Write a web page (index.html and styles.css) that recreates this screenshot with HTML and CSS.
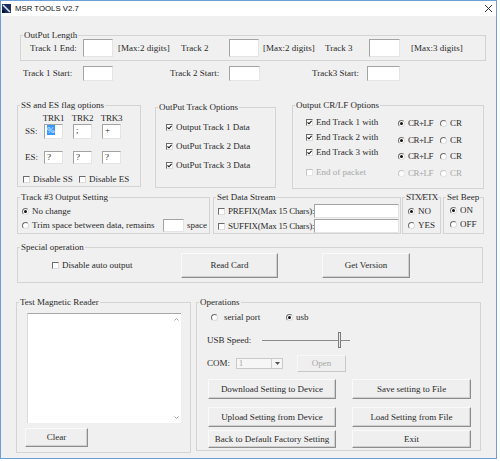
FILE: index.html
```html
<!DOCTYPE html>
<html lang="en">
<head>
  <meta charset="UTF-8">
  <meta name="viewport" content="width=device-width, initial-scale=1.0">
  <title>MSR TOOLS V2.7</title>
  <link rel="stylesheet" href="styles.css">
</head>
<body>
  <div class="window">
    <div class="titlebar">
      <svg class="app-icon" width="9" height="9" viewBox="0 0 9 9">
        <rect width="9" height="9" fill="#1c2d60"/>
        <path d="M1 1L8 8" stroke="#dbe6f4" stroke-width="1.6"/>
        <rect y="6" width="3" height="3" fill="#0a1430"/>
      </svg>
      <span class="title">MSR TOOLS V2.7</span>
      <svg class="close" width="9" height="9" viewBox="0 0 9 9">
        <path d="M1 1L8 8M8 1L1 8" stroke="#222" stroke-width="0.9"/>
      </svg>
    </div>

    <div class="client">
      <div class="group g-length">
        <span class="legend">OutPut Length</span>
        <span>Track 1 End:</span>
        <span class="edit"></span>
        <span class="hint hint-1">[Max:2 digits]</span>
        <span>Track 2</span>
        <span class="edit"></span>
        <span class="hint hint-2">[Max:2 digits]</span>
        <span>Track 3</span>
        <span class="edit"></span>
        <span class="hint hint-3">[Max:3 digits]</span>
      </div>

      <div class="start-row">
        <span>Track 1 Start:</span>
        <span class="edit"></span>
        <span class="start-2">Track 2 Start:</span>
        <span class="edit"></span>
        <span class="start-3">Track3 Start:</span>
        <span class="edit"></span>
      </div>

      <div class="row opt-row">
        <div class="group g-flags">
          <span class="legend">SS and ES flag options</span>
          <div class="trk-head"><span>TRK1</span><span>TRK2</span><span>TRK3</span></div>
          <div class="trk-line trk-ss">
            <span class="trk-lbl">SS:</span>
            <span class="edit"><span class="sel">%</span></span>
            <span class="edit">;</span>
            <span class="edit">+</span>
          </div>
          <div class="trk-line trk-es">
            <span class="trk-lbl">ES:</span>
            <span class="edit">?</span>
            <span class="edit">?</span>
            <span class="edit">?</span>
          </div>
          <div class="flag-line">
            <span class="chk"><span class="cb"></span>Disable SS</span>
            <span class="chk"><span class="cb"></span>Disable ES</span>
          </div>
        </div>

        <div class="group g-tracks">
          <span class="legend">OutPut Track Options</span>
          <span class="chk"><span class="cb"><svg viewBox="0 0 5 5"><path d="M0.5 2.3L2 3.8L4.6 0.8"/></svg></span>Output Track 1 Data</span>
          <span class="chk"><span class="cb"><svg viewBox="0 0 5 5"><path d="M0.5 2.3L2 3.8L4.6 0.8"/></svg></span>OutPut Track 2 Data</span>
          <span class="chk"><span class="cb"><svg viewBox="0 0 5 5"><path d="M0.5 2.3L2 3.8L4.6 0.8"/></svg></span>OutPut Track 3 Data</span>
        </div>

        <div class="group g-crlf">
          <span class="legend">Output CR/LF Options</span>
          <div class="crlf-checks">
            <span class="chk"><span class="cb"><svg viewBox="0 0 5 5"><path d="M0.5 2.3L2 3.8L4.6 0.8"/></svg></span>End Track 1 with</span>
            <span class="chk"><span class="cb"><svg viewBox="0 0 5 5"><path d="M0.5 2.3L2 3.8L4.6 0.8"/></svg></span>End Track 2 with</span>
            <span class="chk"><span class="cb"><svg viewBox="0 0 5 5"><path d="M0.5 2.3L2 3.8L4.6 0.8"/></svg></span>End Track 3 with</span>
            <span class="chk dis"><span class="cb"></span>End of packet</span>
          </div>
          <div class="crlf-radios">
            <div class="pair">
              <span class="rad rad-crlf"><span class="rb on"></span>CR+LF</span>
              <span class="rad"><span class="rb"></span>CR</span>
            </div>
            <div class="pair">
              <span class="rad rad-crlf"><span class="rb on"></span>CR+LF</span>
              <span class="rad"><span class="rb"></span>CR</span>
            </div>
            <div class="pair">
              <span class="rad rad-crlf"><span class="rb on"></span>CR+LF</span>
              <span class="rad"><span class="rb"></span>CR</span>
            </div>
            <div class="pair dis">
              <span class="rad rad-crlf"><span class="rb"></span>CR+LF</span>
              <span class="rad"><span class="rb"></span>CR</span>
            </div>
          </div>
        </div>
      </div>

      <div class="row stream-row">
        <div class="group g-trim">
          <span class="legend">Track #3 Output Setting</span>
          <span class="rad"><span class="rb on"></span>No change</span>
          <div class="trim-line">
            <span class="rad trim-rad"><span class="rb"></span>Trim space between data, remains</span>
            <span class="edit trim-edit"></span>
            <span class="space-lbl">space</span>
          </div>
        </div>

        <div class="group g-stream">
          <span class="legend">Set Data Stream</span>
          <div class="ds-line">
            <span class="chk tight"><span class="cb"></span>PREFIX(Max 15 Chars):</span>
            <span class="edit"></span>
          </div>
          <div class="ds-line">
            <span class="chk tight"><span class="cb"></span>SUFFIX(Max 15 Chars):</span>
            <span class="edit"></span>
          </div>
        </div>

        <div class="group g-stx">
          <span class="legend legend-stx">STX/ETX</span>
          <span class="rad"><span class="rb on"></span>NO</span>
          <span class="rad"><span class="rb"></span>YES</span>
        </div>

        <div class="group g-beep">
          <span class="legend">Set Beep</span>
          <span class="rad"><span class="rb on"></span>ON</span>
          <span class="rad"><span class="rb"></span>OFF</span>
        </div>
      </div>

      <div class="group g-special">
        <span class="legend">Special operation</span>
        <span class="chk auto-chk"><span class="cb"></span>Disable auto output</span>
        <span class="btn btn-read">Read Card</span>
        <span class="btn btn-version">Get Version</span>
      </div>

      <div class="row bottom-row">
        <div class="group g-test">
          <span class="legend">Test Magnetic Reader</span>
          <div class="memo">
            <div class="memo-text"></div>
            <div class="memo-bar">
              <svg width="5" height="3" viewBox="0 0 5 3"><path d="M0.5 2.5L2.5 0.5L4.5 2.5"/></svg>
              <svg width="5" height="3" viewBox="0 0 5 3"><path d="M0.5 0.5L2.5 2.5L4.5 0.5"/></svg>
            </div>
          </div>
          <span class="btn btn-clear">Clear</span>
        </div>

        <div class="group g-ops">
          <span class="legend">Operations</span>
          <div class="port-line">
            <span class="rad rad-serial"><span class="rb"></span>serial port</span>
            <span class="rad"><span class="rb on"></span>usb</span>
          </div>
          <div class="speed-line">
            <span class="speed-lbl">USB Speed:</span>
            <svg width="88" height="18" viewBox="0 0 88 18">
              <path d="M0 9.5H88" stroke="#8c8c8c"/>
              <rect x="76.5" y="1.5" width="2" height="15" fill="#ececec" stroke="#7a7a7a"/>
            </svg>
          </div>
          <div class="com-line">
            <span class="com-lbl">COM:</span>
            <span class="combo">
              <span class="combo-val">1</span>
              <span class="combo-btn"><svg width="5" height="3" viewBox="0 0 5 3"><path d="M0 0H5L2.5 3Z"/></svg></span>
            </span>
            <span class="btn btn-open">Open</span>
          </div>
          <div class="btn-line line-1">
            <span class="btn">Download Setting to Device</span>
            <span class="btn">Save setting to File</span>
          </div>
          <div class="btn-line line-2">
            <span class="btn">Upload Setting from Device</span>
            <span class="btn">Load Setting from File</span>
          </div>
          <div class="btn-line line-3">
            <span class="btn">Back to Default Factory Setting</span>
            <span class="btn">Exit</span>
          </div>
        </div>
      </div>
    </div>
  </div>
</body>
</html>
```

FILE: styles.css
```css
/* MSR TOOLS dialog */
* {
  box-sizing: border-box;
}

body {
  margin: 0;
  background: #fff;
  font-family: "Liberation Serif", "Times New Roman", serif;
  font-size: 9px;
  line-height: 11px;
  color: #2a2a2a;
}

.window {
  width: 497px;
  height: 459px;
  border: 1px solid #6b9fd5;
  background: #f0f0f0;
  overflow: hidden;
}

.titlebar {
  height: 15px;
  background: #fff;
  display: flex;
  align-items: center;
}

.app-icon {
  margin-left: 1px;
}

.title {
  margin-left: 4px;
  font-family: "Liberation Sans", Arial, sans-serif;
  font-size: 7.8px;
  color: #111;
}

.close {
  margin-left: auto;
  margin-right: 3px;
}

.client {
  padding-left: 16px;
}

.row {
  display: flex;
  align-items: flex-start;
}

/* group boxes */
.group {
  position: relative;
  border: 1px solid #d4d4d4;
  flex-shrink: 0;
}

.legend {
  position: absolute;
  top: -6px;
  left: 2px;
  padding: 0 1px;
  background: #f0f0f0;
  white-space: nowrap;
}

/* controls */
.edit {
  display: block;
  background: #fff;
  border: 1px solid;
  border-color: #a3a3a3 #e4e4e4 #e4e4e4 #a3a3a3;
  padding-left: 2px;
}

.sel {
  background: #3399ff;
  color: #fff;
}

.chk,
.rad {
  display: flex;
  align-items: center;
  gap: 3px;
  height: 11px;
  white-space: nowrap;
}

.cb {
  width: 7px;
  height: 7px;
  border: 1px solid;
  border-color: #6c6c6c #dcdcdc #dcdcdc #6c6c6c;
  background: #fff;
  display: flex;
  flex-shrink: 0;
}

.cb svg {
  width: 5px;
  height: 5px;
}

.cb path {
  fill: none;
  stroke: #111;
  stroke-width: 1.1;
}

.rb {
  width: 7px;
  height: 7px;
  border-radius: 50%;
  border: 1px solid;
  border-color: #6c6c6c #dcdcdc #dcdcdc #6c6c6c;
  background: #fff;
  display: flex;
  align-items: center;
  justify-content: center;
  flex-shrink: 0;
}

.rb.on::after {
  content: "";
  width: 3px;
  height: 3px;
  border-radius: 50%;
  background: #111;
}

.dis {
  color: #a8a8a8;
}

.dis .cb,
.dis .rb {
  border-color: #c4c4c4 #e6e6e6 #e6e6e6 #c4c4c4;
}

.btn {
  display: flex;
  align-items: center;
  justify-content: center;
  background: #efefef;
  border: 1px solid;
  border-color: #fafafa #8d8d8d #8d8d8d #fafafa;
  box-shadow: inset -1px -1px 0 #d0d0d0;
  white-space: nowrap;
}

/* output length */
.g-length {
  margin: 19px 0 0 3px;
  width: 466px;
  height: 26px;
  padding-left: 9px;
  display: grid;
  grid-template-columns: 53px 30px 68px 48px 30px 66px 44px 31px auto;
  align-items: center;
}

.g-length .edit {
  height: 18px;
}

.hint-1 { padding-left: 5px; }
.hint-2 { padding-left: 4px; }
.hint-3 { padding-left: 11px; }

.start-row {
  margin: 5px 0 0 6px;
  height: 15px;
  display: grid;
  grid-template-columns: 60px 30px 116px 31px 107px 33px;
  align-items: center;
}

.start-row .edit {
  height: 15px;
}

.start-2 { padding-left: 57px; }
.start-3 { padding-left: 52px; }

/* options row */
.opt-row {
  margin-top: 24px;
}

.g-flags {
  width: 124px;
  height: 82px;
}

.trk-head {
  display: flex;
  margin: 7px 0 0 21px;
  height: 11px;
  letter-spacing: -0.3px;
}

.trk-head span {
  width: 29px;
  text-align: center;
}

.trk-line {
  display: grid;
  grid-template-columns: 16px 19px 19px 19px;
  column-gap: 10px;
}

.trk-lbl {
  padding-left: 7px;
  align-self: center;
}

.trk-ss { height: 15px; }

.trk-es {
  height: 13px;
  margin-top: 12px;
}

.flag-line {
  display: grid;
  grid-template-columns: 56px auto;
  margin: 10px 0 0 5px;
}

.g-tracks {
  margin: 2px 0 0 14px;
  width: 121px;
  height: 81px;
  padding: 14px 0 0 10px;
  display: flex;
  flex-direction: column;
  gap: 8px;
}

.g-crlf {
  margin-left: 16px;
  width: 192px;
  height: 84px;
  display: flex;
}

.crlf-checks {
  width: 105px;
  padding: 11px 0 0 13px;
  display: flex;
  flex-direction: column;
  gap: 4px;
}

.crlf-checks .dis {
  margin-top: 5px;
}

.crlf-radios {
  padding-top: 12px;
  display: flex;
  flex-direction: column;
  gap: 5.5px;
}

.pair {
  display: flex;
}

.rad-crlf {
  width: 42px;
  letter-spacing: -0.5px;
}

/* stream row */
.stream-row {
  margin-top: 8px;
}

.g-trim {
  width: 193px;
  height: 37px;
  padding: 8px 0 0 4px;
}

.trim-line {
  display: flex;
  align-items: center;
  height: 13px;
  margin-top: 2px;
}

.trim-rad { width: 141px; }

.trim-edit {
  width: 21px;
  height: 13px;
}

.space-lbl { margin-left: 3px; }

.g-stream {
  margin-left: 3px;
  width: 188px;
  height: 37px;
  padding: 6px 0 0 4px;
}

.ds-line {
  display: grid;
  grid-template-columns: 96px 85px;
  height: 14px;
  align-items: center;
}

.ds-line + .ds-line { margin-top: 1px; }

.ds-line .edit { height: 14px; }

.tight { letter-spacing: -0.2px; }

.g-stx {
  margin-left: 1px;
  width: 39px;
  height: 37px;
  padding: 8px 0 0 5px;
  display: flex;
  flex-direction: column;
  gap: 3px;
}

.legend-stx { letter-spacing: -0.8px; }

.g-beep {
  margin-left: 2px;
  width: 41px;
  height: 37px;
  padding: 7px 0 0 6px;
  display: flex;
  flex-direction: column;
  gap: 3px;
}

/* special operation */
.g-special {
  margin-top: 13px;
  width: 466px;
  height: 36px;
  display: flex;
  align-items: center;
}

.auto-chk {
  margin-left: 34px;
  width: 129px;
}

.btn-read {
  width: 97px;
  height: 25px;
}

.btn-version {
  margin-left: 44px;
  width: 88px;
  height: 25px;
}

/* bottom row */
.bottom-row {
  margin-top: 19px;
}

.g-test {
  margin-left: -1px;
  width: 175px;
  height: 151px;
  display: flex;
  flex-direction: column;
  align-items: flex-start;
}

.memo {
  margin: 10px 0 0 10px;
  width: 154px;
  height: 110px;
  display: flex;
  background: #fff;
  border-top: 1px solid #a8a8a8;
  border-left: 1px solid #dadada;
}

.memo-text { flex: 1; }

.memo-bar {
  width: 10px;
  padding: 4px 0;
  display: flex;
  flex-direction: column;
  justify-content: space-between;
  align-items: center;
}

.memo-bar path {
  fill: none;
  stroke: #a0a0a0;
}

.btn-clear {
  margin: 5px 0 0 8px;
  width: 63px;
  height: 19px;
}

.g-ops {
  margin-left: 5px;
  width: 285px;
  height: 149px;
}

.port-line {
  display: flex;
  margin: 9px 0 0 14px;
}

.rad-serial {
  width: 75px;
  gap: 6px;
}

.speed-line {
  display: flex;
  align-items: center;
  height: 18px;
  margin: 8px 0 0 10px;
}

.speed-lbl { width: 55px; }

.com-line {
  display: flex;
  align-items: center;
  height: 17px;
  margin: 6px 0 0 10px;
}

.com-lbl { width: 29px; }

.combo {
  display: flex;
  width: 47px;
  height: 11px;
  border: 1px solid #c9c9c9;
  background: #f6f6f6;
}

.combo-val {
  flex: 1;
  padding-left: 2px;
  color: #a0a0a0;
  font-size: 8px;
  line-height: 9px;
}

.combo-btn {
  width: 11px;
  border-left: 1px solid #d0d0d0;
  display: flex;
  align-items: center;
  justify-content: center;
}

.combo-btn path { fill: #555; }

.btn-open {
  margin-left: 14px;
  width: 49px;
  height: 17px;
  color: #a8a8a8;
  border-color: #f8f8f8 #c8c8c8 #c8c8c8 #f8f8f8;
  box-shadow: none;
}

.btn-line {
  display: grid;
  grid-template-columns: 128px 119px;
  column-gap: 16px;
  margin-left: 11px;
}

.line-1 {
  height: 20px;
  margin-top: 7px;
}

.line-2 {
  height: 20px;
  margin-top: 8px;
}

.line-3 {
  height: 18px;
  margin-top: 3px;
}
```
